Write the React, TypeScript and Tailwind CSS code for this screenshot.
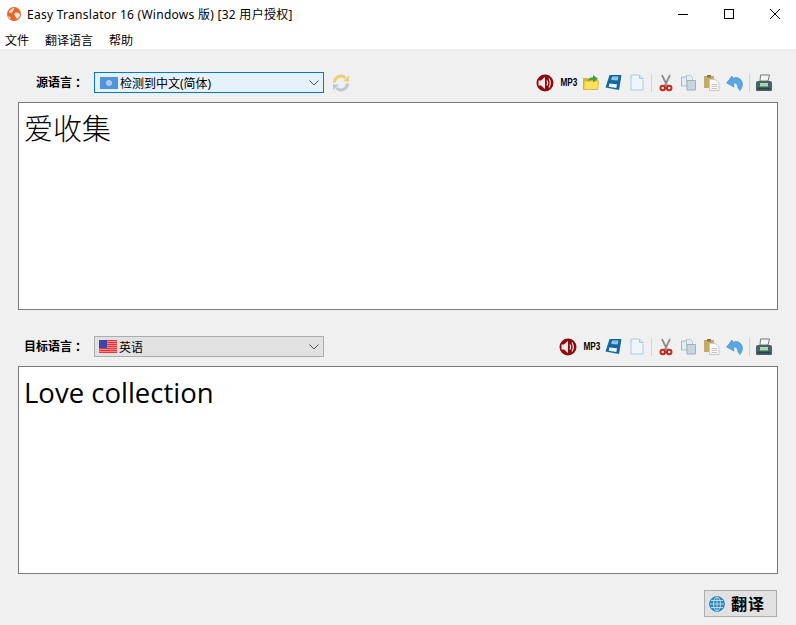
const cjk = "font-['Noto_Sans','Noto_Sans_CJK_SC',sans-serif]";

function AppLogo() {
  return (
    <svg width="16" height="16" viewBox="0 0 16 16">
      <circle cx="8" cy="8" r="7" fill="#e8662a" />
      <path d="M3 5c2-1 3-3 5-3 1 1-1 2-1 3s-2 2-3 2-1-1-1-2zM9 7c2-1 4 0 5 1 0 2-1 4-3 5-1-1-1-2-2-3s-1-2 0-3z" fill="#f9e3d2" />
      <path d="M2 10c1 0 2 1 3 2l-1 1c-1-1-2-2-2-3z" fill="#fbd9bd" />
    </svg>
  );
}

function Speaker() {
  return (
    <svg width="18" height="18" viewBox="0 0 18 18">
      <circle cx="9" cy="9" r="8.500" fill="#8c0a12" />
      <path d="M2.500 6.500h2.500L9 3v12l-4-3.500H2.500z" fill="#f5e6e6" />
      <path d="M11 6.500c.8 1.500.8 3.500 0 5M13 4.500c1.500 2.700 1.500 6.300 0 9" fill="none" stroke="#f5e6e6" strokeWidth="1.200" />
    </svg>
  );
}

function Mp3() {
  return <span className="w-[17px] text-center text-[10px] font-bold leading-none text-black scale-x-[0.82] font-['Liberation_Sans',sans-serif]">MP3</span>;
}

function OpenFolder() {
  return (
    <svg width="17" height="17" viewBox="0 0 17 17">
      <path d="M1 4h5l1 1.500h8.500V15.500H1z" fill="#d9b332" />
      <path d="M2 7h14.500l-.7 8.500H2z" fill="#fbe25e" stroke="#cfa92a" strokeWidth=".7" />
      <path d="M6 7c0-2.500 2-3.700 5-3.700V1l5 3.700-5 3.800V6C9 6 7.500 6 6 7z" fill="#3fa535" />
    </svg>
  );
}

function Floppy() {
  return (
    <svg width="17" height="17" viewBox="0 0 17 17">
      <path d="M4.500 1h12l-2.500 15-13.500-2.500z" fill="#14689f" />
      <path d="M7 2.500h6.500l-.8 4-6.500-.5z" fill="#8fc6e6" />
      <path d="M4.500 9.500l7.500.8-.7 3.700-7.600-1.200z" fill="#eef7fb" />
    </svg>
  );
}

function BlankDoc() {
  return (
    <svg width="16" height="17" viewBox="0 0 16 17">
      <path d="M2 1h8.500L14 4.500V16H2z" fill="#eef5fd" stroke="#a9c8e8" />
      <path d="M10.500 1v3.500H14" fill="#d3e4f6" stroke="#a9c8e8" />
    </svg>
  );
}

function Scissors() {
  return (
    <svg width="14" height="18" viewBox="0 0 14 18">
      <path d="M3 1l5 10.500M11 1L6 11.500" stroke="#8f8f8f" strokeWidth="1.800" fill="none" />
      <circle cx="3.800" cy="14" r="2.300" fill="none" stroke="#c8231b" strokeWidth="1.900" />
      <circle cx="10.200" cy="14" r="2.300" fill="none" stroke="#c8231b" strokeWidth="1.900" />
    </svg>
  );
}

function CopyDocs() {
  return (
    <svg width="17" height="17" viewBox="0 0 17 17">
      <path d="M1.500 3h5l2 2v7h-7z" fill="#e6ebef" stroke="#a9b6c0" />
      <path d="M6.500 1.500h4l2 2v5h-6z" fill="#e6ebef" stroke="#b9c4cc" />
      <path d="M7 6.500h8.500V16H7z" fill="#c6d5df" stroke="#9fb0bc" />
    </svg>
  );
}

function PasteDoc() {
  return (
    <svg width="17" height="17" viewBox="0 0 17 17">
      <path d="M1 2h10v12H1z" fill="#c9a765" />
      <path d="M4 1h4v2.500H4z" fill="#8c7443" />
      <path d="M6.500 5.500h6L16 9v7.500H6.500z" fill="#f8f8f8" stroke="#c9c9c9" />
      <path d="M8.500 10.500h5.500M8.500 12.500h5.500M8.500 14.500h5.500" stroke="#c4c4c4" />
    </svg>
  );
}

function UndoArrow() {
  return (
    <svg width="18" height="16" viewBox="0 0 18 16">
      <path d="M6 1L.5 8l7.500 4-.5-4c2.500-.5 4 .8 4.500 5l2 2.500c3-3.500 3.500-8.500 0-11.500-2.300-1.800-5-1.800-7.200-.7z" fill="#58a8e6" stroke="#2f7fc4" strokeWidth=".5" />
    </svg>
  );
}

function Fax() {
  return (
    <svg width="18" height="18" viewBox="0 0 18 18">
      <path d="M5.500 1h9L13 7H5z" fill="#f4f4f4" stroke="#6f787d" />
      <path d="M1 8.500Q1 7 3 7h12q2 0 2 1.500V16a1 1 0 01-1 1H2a1 1 0 01-1-1z" fill="#48636a" />
      <path d="M5 9h8v3.500H5z" fill="#a6dba8" />
      <path d="M2.500 14.500h13" stroke="#2a3f44" strokeWidth="1.500" />
    </svg>
  );
}

function Refresh() {
  return (
    <svg width="18" height="18" viewBox="0 0 18 18" fill="none">
      <path d="M2.500 8.500A6.500 6.500 0 0113.500 4" stroke="#eccf73" strokeWidth="3" />
      <path d="M11 7.500h6v-6z" fill="#eccf73" />
      <path d="M15.500 9.500A6.500 6.500 0 014.500 14" stroke="#bccad3" strokeWidth="3" />
      <path d="M7 10.500H1v6z" fill="#bccad3" />
    </svg>
  );
}

function Globe() {
  return (
    <svg width="16" height="16" viewBox="0 0 16 16" fill="none" stroke="#d5e9f3" strokeWidth=".8">
      <circle cx="8" cy="8" r="7.500" fill="#2a87bd" stroke="#2a87bd" />
      <ellipse cx="8" cy="8" rx="3.500" ry="7" />
      <path d="M8 1v14M1 8h14M2 4.500h12M2 11.500h12" />
    </svg>
  );
}

function Chevron() {
  return (
    <svg width="10" height="6" viewBox="0 0 10 6" fill="none" stroke="#555" strokeWidth="1">
      <path d="M.5.500L5 5 9.500.500" />
    </svg>
  );
}

function Sep() {
  return <div className="w-px h-[18px] bg-[#d5d5d5]" />;
}

function Slot({ children }: { children: React.ReactNode }) {
  return <div className="w-[23px] h-5 flex items-center justify-center">{children}</div>;
}

function Toolbar({ withOpen }: { withOpen?: boolean }) {
  return (
    <div className="ml-auto flex items-center mr-[3px]">
      <Slot><Speaker /></Slot>
      <Slot><Mp3 /></Slot>
      {withOpen && <Slot><OpenFolder /></Slot>}
      <Slot><Floppy /></Slot>
      <Slot><BlankDoc /></Slot>
      <div className="w-[6px] flex justify-center"><Sep /></div>
      <Slot><Scissors /></Slot>
      <Slot><CopyDocs /></Slot>
      <Slot><PasteDoc /></Slot>
      <Slot><UndoArrow /></Slot>
      <div className="w-[6px] flex justify-center"><Sep /></div>
      <Slot><Fax /></Slot>
    </div>
  );
}

function Flag() {
  return (
    <div className="relative w-[18px] h-[13px] bg-[repeating-linear-gradient(#e8343a_0,#e8343a_1px,#f98a8a_1px,#f98a8a_2px)]">
      <div className="absolute left-0 top-0 w-2 h-[8px] bg-[#3d46a8]" />
    </div>
  );
}

function UnFlag() {
  return (
    <div className="w-[18px] h-3 bg-[#4f94dc] flex items-center justify-center">
      <div className="w-[6px] h-[6px] rounded-full bg-[#a9ccef]" />
    </div>
  );
}

function TextPane({ children }: { children: React.ReactNode }) {
  return <div className="h-[208px] bg-white border border-[#7a7a7a] px-[5px] pt-[5px] overflow-hidden">{children}</div>;
}

export default function App() {
  return (
    <div className={`w-[796px] h-[625px] bg-[#f0f0f0] flex flex-col text-black overflow-hidden ${cjk}`}>
      <div className="bg-white h-[49px] shrink-0">
        <div className="h-7 flex items-center pl-[6px]">
          <AppLogo />
          <span className="ml-[5px] pt-px text-xs tracking-[0.27px]">Easy Translator 16 (Windows 版) [32 用户授权]</span>
          <div className="ml-auto flex items-center mr-[-2px]">
            <div className="w-[46px] h-7 flex items-center justify-center">
              <div className="w-[10px] h-px bg-black" />
            </div>
            <div className="w-[46px] h-7 flex items-center justify-center">
              <div className="w-[10px] h-[10px] border border-black" />
            </div>
            <div className="w-[46px] h-7 flex items-center justify-center">
              <svg width="10" height="10" viewBox="0 0 10 10" stroke="#000" strokeWidth="1"><path d="M0 0l10 10M10 0L0 10" /></svg>
            </div>
          </div>
        </div>
        <div className="h-[21px] flex items-center pl-[5px] pt-1 gap-4 text-xs">
          <span>文件</span>
          <span>翻译语言</span>
          <span>帮助</span>
        </div>
      </div>

      <div className="flex-1 px-[18px] pt-[23px]">
        <div className="flex items-center h-[21px] mb-[9px]">
          <span className="w-[69px] text-right text-xs font-bold">源语言<span className="ml-[3px]">：</span></span>
          <div className="ml-[7px] w-[230px] h-[21px] bg-[#e5f1fb] border border-[#0078d7] flex items-center pl-[5px] pr-[3px] text-xs">
            <UnFlag />
            <span className="ml-[2px] pt-[2px]">检测到中文(简体)</span>
            <div className="ml-auto mr-px"><Chevron /></div>
          </div>
          <div className="ml-2"><Refresh /></div>
          <Toolbar withOpen />
        </div>
        <TextPane>
          <div className="text-[29px] font-extralight leading-[40px] pt-px">爱收集</div>
        </TextPane>

        <div className="flex items-center h-[21px] mt-[26px] mb-[9px]">
          <span className="w-[69px] text-right text-xs font-bold">目标语言<span className="ml-[3px]">：</span></span>
          <div className="ml-[7px] w-[230px] h-[21px] bg-[#e1e1e1] border border-[#adadad] flex items-center pl-[4px] pr-[3px] text-xs">
            <Flag />
            <span className="ml-[2px] pt-[2px]">英语</span>
            <div className="ml-auto mr-px"><Chevron /></div>
          </div>
          <Toolbar />
        </div>
        <TextPane>
          <div className="text-[27.5px] leading-[40px] pt-px font-['Open_Sans',sans-serif]">Love collection</div>
        </TextPane>

        <div className="flex justify-end mt-4 mr-px">
          <button className="w-[73px] h-[27px] bg-[#e1e1e1] border border-[#adadad] flex items-center pl-[4px] gap-[6px] text-base font-bold">
            <Globe />
            <span className="tracking-[1px]">翻译</span>
          </button>
        </div>
      </div>
    </div>
  );
}
